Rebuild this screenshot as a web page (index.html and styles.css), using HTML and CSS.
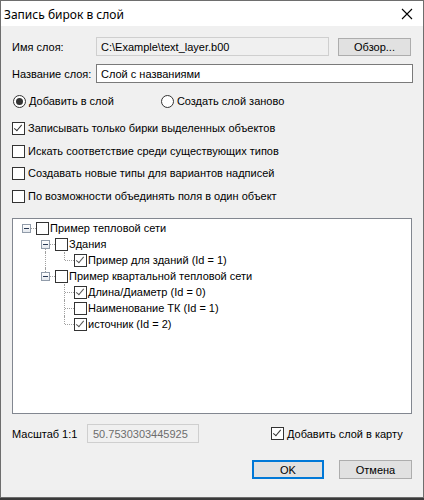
FILE: index.html
```html
<!DOCTYPE html>
<html lang="ru">
<head>
<meta charset="utf-8">
<title>Запись бирок в слой</title>
<link rel="stylesheet" href="styles.css">
</head>
<body>
<div class="window">
  <div class="titlebar">
    <span class="title">Запись бирок в слой</span>
    <span class="close">
      <svg width="12" height="12" viewBox="0 0 12 12"><path d="M1 1 L11 11 M11 1 L1 11" stroke="#000" stroke-width="1.1" fill="none"/></svg>
    </span>
  </div>
  <div class="content">
    <div class="form-row first">
      <span class="label">Имя слоя:</span>
      <span class="textbox readonly path">C:\Example\text_layer.b00</span>
      <span class="button browse">Обзор...</span>
    </div>
    <div class="form-row second">
      <span class="label">Название слоя:</span>
      <span class="textbox name">Слой с названиями</span>
    </div>
    <div class="radio-row">
      <span class="radio-item"><span class="radio checked"></span><span>Добавить в слой</span></span>
      <span class="radio-item second-radio"><span class="radio"></span><span>Создать слой заново</span></span>
    </div>
    <div class="check-row r1"><span class="checkbox checked"></span><span>Записывать только бирки выделенных объектов</span></div>
    <div class="check-row r2"><span class="checkbox"></span><span>Искать соответствие среди существующих типов</span></div>
    <div class="check-row r3"><span class="checkbox"></span><span>Создавать новые типы для вариантов надписей</span></div>
    <div class="check-row r4"><span class="checkbox"></span><span>По возможности объединять поля в один объект</span></div>

    <div class="tree">
      <div class="node"><span class="cell exp"><span class="box"></span></span><span class="checkbox tcb"></span><span class="tlabel">Пример тепловой сети</span></div>
      <div class="node"><span class="cell"></span><span class="cell exp down"><span class="box"></span></span><span class="checkbox tcb"></span><span class="tlabel">Здания</span></div>
      <div class="node"><span class="cell"></span><span class="cell pipe"></span><span class="cell leaf"></span><span class="checkbox tcb checked"></span><span class="tlabel">Пример для зданий (Id = 1)</span></div>
      <div class="node"><span class="cell"></span><span class="cell exp up"><span class="box"></span></span><span class="checkbox tcb"></span><span class="tlabel">Пример квартальной тепловой сети</span></div>
      <div class="node"><span class="cell"></span><span class="cell"></span><span class="cell tee"></span><span class="checkbox tcb checked"></span><span class="tlabel">Длина/Диаметр (Id = 0)</span></div>
      <div class="node"><span class="cell"></span><span class="cell"></span><span class="cell tee"></span><span class="checkbox tcb"></span><span class="tlabel">Наименование ТК (Id = 1)</span></div>
      <div class="node"><span class="cell"></span><span class="cell"></span><span class="cell leaf"></span><span class="checkbox tcb checked"></span><span class="tlabel">источник (Id = 2)</span></div>
    </div>

    <div class="scale-row">
      <span class="label scale-label">Масштаб 1:1</span>
      <span class="textbox readonly scale">50.7530303445925</span>
      <span class="add-map"><span class="checkbox checked"></span><span>Добавить слой в карту</span></span>
    </div>
    <div class="buttons">
      <span class="button ok">OK</span>
      <span class="button">Отмена</span>
    </div>
  </div>
</div>
</body>
</html>
```
FILE: styles.css
```css
html, body {
  margin: 0;
  padding: 0;
  background: #3a3a3a;
}
body {
  width: 424px;
  height: 500px;
  font-family: "Liberation Sans", Arial, sans-serif;
  font-size: 11px;
  color: #000;
}
.window {
  width: 424px;
  height: 498px;
  box-sizing: border-box;
  border: 1px solid #6e6e6e;
  background: #f0f0f0;
  display: flex;
  flex-direction: column;
}
.titlebar {
  height: 25px;
  background: #fff;
  display: flex;
  align-items: center;
  padding-left: 3px;
  flex-shrink: 0;
}
.title {
  font-family: "Noto Sans", "Liberation Sans", sans-serif;
  font-size: 12px;
  flex: 1;
  padding-top: 2px;
}
.close {
  width: 12px;
  height: 12px;
  margin-right: 10px;
  display: flex;
}
.content {
  padding: 11px 11px 0 11px;
  display: flex;
  flex-direction: column;
}
.form-row {
  display: flex;
  align-items: center;
  height: 19px;
}
.form-row.second { margin-top: 8px; }
.label {
  width: 84px;
  flex-shrink: 0;
}
.textbox {
  height: 19px;
  box-sizing: border-box;
  display: flex;
  align-items: center;
  padding-left: 4px;
  border: 1px solid #7a7a7a;
  background: #fff;
}
.textbox.readonly {
  background: #f0f0f0;
  border-color: #cfcfcf;
}
.path { width: 233px; }
.name { flex: 1; margin-right: -1px; }
.button {
  height: 19px;
  box-sizing: border-box;
  width: 73px;
  background: #e1e1e1;
  border: 1px solid #adadad;
  display: flex;
  align-items: center;
  justify-content: center;
}
.browse { margin-left: 9px; height: 18px; margin-top: 1px; }
.radio-row {
  margin-top: 10px;
  height: 16px;
  display: flex;
  align-items: center;
}
.radio-item {
  display: flex;
  align-items: center;
}
.second-radio { margin-left: 46px; }
.radio {
  width: 13px;
  height: 13px;
  box-sizing: border-box;
  border: 1px solid #333;
  border-radius: 50%;
  background: #fff;
  margin: 0 3px 0 1px;
  display: flex;
  align-items: center;
  justify-content: center;
}
.radio.checked::after {
  content: "";
  width: 7px;
  height: 7px;
  border-radius: 50%;
  background: #333;
}
.check-row {
  height: 16px;
  display: flex;
  align-items: center;
}
.check-row.r1 { margin-top: 11px; }
.check-row.r2 { margin-top: 7px; }
.check-row.r3 { margin-top: 6px; }
.check-row.r4 { margin-top: 7px; }
.checkbox {
  width: 13px;
  height: 13px;
  box-sizing: border-box;
  border: 1px solid #333;
  background: #fff;
  margin-right: 3px;
  flex-shrink: 0;
  position: relative;
}
.checkbox.checked::after {
  content: "";
  position: absolute;
  left: 3px;
  top: 0px;
  width: 3px;
  height: 7px;
  border-right: 1.5px solid #333;
  border-bottom: 1.5px solid #333;
  transform: rotate(40deg);
}
.tree {
  margin-top: 14px;
  height: 196px;
  box-sizing: border-box;
  border: 1px solid #828790;
  background: #fff;
  padding: 1px 0 0 4px;
}
.node {
  height: 16px;
  display: flex;
  align-items: center;
}
.cell {
  width: 19px;
  height: 16px;
  position: relative;
  flex-shrink: 0;
}
.cell.exp::after,
.cell.leaf::after,
.cell.tee::after {
  content: "";
  position: absolute;
  top: 8px;
  left: 10px;
  width: 9px;
  border-top: 1px dotted #a0a0a0;
}
.cell.exp::after { left: 14px; width: 5px; }
.cell.pipe::before,
.cell.tee::before {
  content: "";
  position: absolute;
  left: 9px;
  top: 0;
  height: 16px;
  border-left: 1px dotted #a0a0a0;
}
.cell.leaf::before {
  content: "";
  position: absolute;
  left: 9px;
  top: 0;
  height: 8px;
  border-left: 1px dotted #a0a0a0;
}
.cell.exp.down::before {
  content: "";
  position: absolute;
  left: 9px;
  top: 9px;
  height: 7px;
  border-left: 1px dotted #a0a0a0;
}
.cell.exp.up::before {
  content: "";
  position: absolute;
  left: 9px;
  top: 0;
  height: 4px;
  border-left: 1px dotted #a0a0a0;
}
.box {
  position: absolute;
  left: 5px;
  top: 4px;
  width: 9px;
  height: 9px;
  box-sizing: border-box;
  border: 1px solid #919caa;
  background: linear-gradient(#fff, #e4e8ee);
  z-index: 1;
}
.box::after {
  content: "";
  position: absolute;
  left: 1px;
  top: 3px;
  width: 5px;
  height: 1px;
  background: #2a3a55;
}
.tcb { margin-right: 1px; border-color: #333; }
.tcb.checked::after {
  border-color: #555;
}
.tlabel { white-space: nowrap; }
.scale-row {
  margin-top: 10px;
  height: 19px;
  display: flex;
  align-items: center;
}
.scale-label { width: 75px; }
.scale {
  width: 112px;
  color: #6d6d6d;
  padding-left: 5px;
}
.add-map {
  margin-left: 72px;
  display: flex;
  align-items: center;
}
.buttons {
  margin-top: 17px;
  display: flex;
  justify-content: flex-end;
  gap: 15px;
}
.button.ok {
  width: 72px;
  border: 2px solid #0078d7;
}
```
